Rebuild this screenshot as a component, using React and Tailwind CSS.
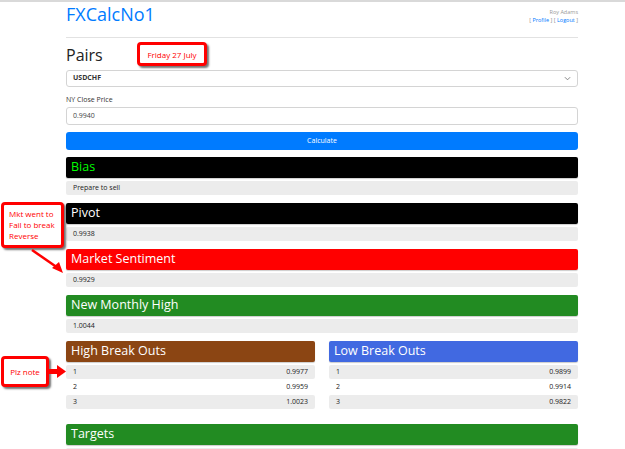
import React from "react";

const font = { fontFamily: '"Open Sans", "Noto Sans", sans-serif' };

function Header({ title, bg, color = "text-white" }) {
  return (
    <div className={`h-[21px] rounded-[2px] ${bg} flex items-center px-[5px] shadow-[0_1px_1px_rgba(0,0,0,0.2)]`}>
      <span className={`text-[12.5px] leading-none ${color}`}>{title}</span>
    </div>
  );
}

function Row({ children, white = false }) {
  return (
    <div className={`h-[14px] rounded-[2px] ${white ? "bg-white" : "bg-[#ececec]"} flex items-center justify-between px-[7px] text-[7px] text-[#222]`}>
      {children}
    </div>
  );
}

function Section({ title, bg, color, value }) {
  return (
    <div className="flex flex-col gap-[3px] mb-[8px]">
      <Header title={title} bg={bg} color={color} />
      <Row>
        <span>{value}</span>
      </Row>
    </div>
  );
}

function BreakOuts({ title, bg, values }) {
  return (
    <div className="flex-1 flex flex-col">
      <Header title={title} bg={bg} />
      <div className="flex flex-col gap-[1px] mt-[3px]">
        {values.map((v, i) => (
          <Row key={i} white={i === 1}>
            <span>{i + 1}</span>
            <span>{v}</span>
          </Row>
        ))}
      </div>
    </div>
  );
}

function Callout({ className, children }) {
  return (
    <div
      className={`absolute bg-white border-[3px] border-[#ff0000] rounded-[4px] shadow-[2px_2px_2px_rgba(0,0,0,0.55)] text-[#ff0000] text-[8px] leading-[11px] ${className}`}
    >
      {children}
    </div>
  );
}

export default function App() {
  return (
    <div className="relative w-[625px] h-[449px] overflow-hidden bg-white" style={font}>
      <div className="h-[2px] bg-[#d9d9d9]" />
      <div className="ml-[66px] w-[512px]">
        <div className="flex justify-between items-start h-[36px] border-b border-[#e2e2e2]">
          <div className="text-[18px] leading-none text-[#007bff] mt-[3px]">FXCalcNo1</div>
          <div className="text-right text-[5.5px] leading-[8px] mt-[6px]">
            <div className="text-[#999]">Roy Adams</div>
            <div className="text-[#888]">
              [ <span className="text-[#007bff]">Profile</span> ] [ <span className="text-[#007bff]">Logout</span> ]
            </div>
          </div>
        </div>

        <div className="text-[16px] leading-none text-[#222] mt-[9px]">Pairs</div>
        <div className="mt-[7px] h-[17px] border border-[#d4d4d4] rounded-[3px] flex items-center justify-between px-[6px]">
          <span className="text-[7px] font-bold text-[#333]">USDCHF</span>
          <svg width="7" height="5" viewBox="0 0 8 5" fill="none" stroke="#777" strokeWidth="1">
            <path d="M1 1l3 3 3-3" />
          </svg>
        </div>

        <div className="mt-[9px] text-[7px] text-[#333] leading-none">NY Close Price</div>
        <div className="mt-[4px] h-[18px] border border-[#d4d4d4] rounded-[3px] flex items-center px-[6px]">
          <span className="text-[7px] text-[#444]">0.9940</span>
        </div>

        <div className="mt-[7px] h-[18px] bg-[#007bff] rounded-[3px] flex items-center justify-center">
          <span className="text-[7px] text-white">Calculate</span>
        </div>

        <div className="mt-[7px]">
          <Section title="Bias" bg="bg-black" color="text-[#00ff00]" value="Prepare to sell" />
          <Section title="Pivot" bg="bg-black" value="0.9938" />
          <Section title="Market Sentiment" bg="bg-[#ff0000]" value="0.9929" />
          <Section title="New Monthly High" bg="bg-[#228b22]" value="1.0044" />
        </div>

        <div className="flex gap-[14px] mt-[1px]">
          <BreakOuts title="High Break Outs" bg="bg-[#8b4513]" values={["0.9977", "0.9959", "1.0023"]} />
          <BreakOuts title="Low Break Outs" bg="bg-[#4169e1]" values={["0.9899", "0.9914", "0.9822"]} />
        </div>

        <div className="mt-[15px]">
          <Header title="Targets" bg="bg-[#228b22]" />
          <div className="mt-[3px]">
            <Row>
              <span></span>
            </Row>
          </div>
        </div>
      </div>

      <Callout className="left-[137px] top-[42px] w-[70px] h-[24px] flex items-center justify-center">
        Friday 27 July
      </Callout>

      <Callout className="left-[1px] top-[202px] w-[63px] h-[46px] px-[5px] pt-[3px]">
        Mkt went to
        <br />
        Fail to break
        <br />
        Reverse
      </Callout>

      <Callout className="left-[1px] top-[356px] w-[48px] h-[31px] flex items-center justify-center">
        Plz note
      </Callout>

      <svg className="absolute left-0 top-0" width="625" height="449" style={{ pointerEvents: "none" }}>
        <line x1="32" y1="250" x2="58" y2="268" stroke="#ff0000" strokeWidth="2.5" />
        <polygon points="63,273 52,268 59,262" fill="#ff0000" />
        <rect x="49" y="369" width="9" height="5" fill="#ff0000" />
        <polygon points="57,365 66,371.5 57,378" fill="#ff0000" />
      </svg>
    </div>
  );
}
